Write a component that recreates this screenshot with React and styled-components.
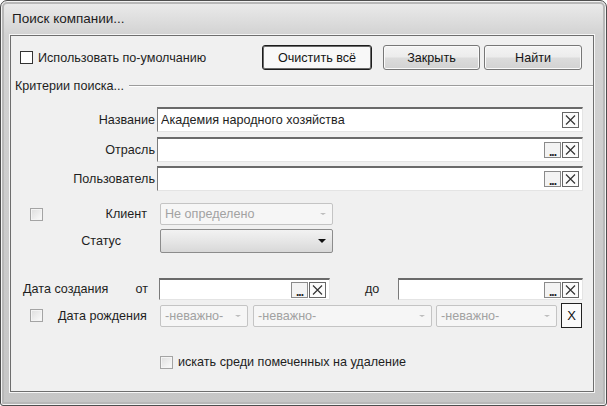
import React from "react";
import styled, { createGlobalStyle } from "styled-components";

const GlobalStyle = createGlobalStyle`
  body {
    margin: 0;
    background: #fff;
    font-family: "Liberation Sans", Arial, sans-serif;
  }
`;

const Window = styled.div`
  width: 607px;
  height: 406px;
  box-sizing: border-box;
  display: flex;
  flex-direction: column;
  padding: 0 12px 13px 9px;
  border: 1px solid #4e4e4e;
  border-radius: 7px 7px 3px 3px;
  background: linear-gradient(#ececec, #d2d2d2 34px, #c6c6c6);
  box-shadow: inset 0 0 0 1px #f3f3f3, inset 0 0 0 3px #b8b8b8;
`;

const TitleBar = styled.div`
  height: 34px;
  display: flex;
  align-items: center;
  padding-left: 2px;
  font-size: 13.5px;
  color: #1c1c1c;
`;

const Client = styled.div`
  flex: 1;
  display: flex;
  flex-direction: column;
  background: #f0f0f0;
  border: 1px solid #6e6e6e;
  box-shadow: 0 0 0 1px #f6f6f6;
  font-size: 12.6px;
  color: #1e1e1e;
`;

const TopRow = styled.div`
  display: flex;
  align-items: center;
  height: 25px;
  margin-top: 9px;
  padding: 0 11px 0 9px;
`;

const CheckLabel = styled.label`
  display: flex;
  align-items: center;
  gap: 5px;
  white-space: nowrap;
`;

const Box = styled.span`
  width: 13px;
  height: 13px;
  box-sizing: border-box;
  flex: none;
  border: 1px solid ${(p) => (p.$dark ? "#333" : "#a4a4a4")};
  background: ${(p) =>
    p.$dark ? "#fff" : "linear-gradient(135deg, #dedede, #fbfbfb)"};
  box-shadow: ${(p) => (p.$dark ? "none" : "inset 0 0 0 1px #f4f4f4")};
`;

const Spacer = styled.div`
  flex: 1;
`;

const Btn = styled.button`
  width: ${(p) => p.$w}px;
  height: 25px;
  margin-left: ${(p) => p.$ml || 0}px;
  box-sizing: border-box;
  border: 1px solid ${(p) => (p.$default ? "#1c1c1c" : "#777")};
  border-radius: 3px;
  box-shadow: ${(p) =>
    p.$default ? "inset 0 0 0 1px #6a6a6a" : "inset 0 0 0 1px #fafafa"};
  background: ${(p) =>
    p.$default
      ? "#f8f8f8"
      : "linear-gradient(#f4f4f4 0%, #ececec 48%, #dcdcdc 52%, #d2d2d2 100%)"};
  font: inherit;
  font-size: 12.6px;
  color: #151515;
  padding: 0;
`;

const GroupHeader = styled.div`
  display: flex;
  align-items: center;
  height: 16px;
  margin-top: 8px;
  padding-left: 4px;
  white-space: nowrap;
`;

const GroupLine = styled.div`
  flex: 1;
  margin-left: 5px;
  border-top: 1px solid #9c9c9c;
  border-bottom: 1px solid #fff;
`;

const Row = styled.div`
  display: flex;
  align-items: center;
  height: ${(p) => p.$h || 25}px;
  margin-top: ${(p) => p.$mt || 0}px;
  padding-left: ${(p) => p.$pl || 0}px;
`;

const Label = styled.div`
  width: ${(p) => p.$w}px;
  flex: none;
  box-sizing: border-box;
  text-align: ${(p) => p.$align || "right"};
  padding-left: ${(p) => p.$pl || 0}px;
  padding-right: ${(p) => p.$pr || 0}px;
  white-space: nowrap;
`;

const CheckCell = styled.div`
  width: ${(p) => p.$w}px;
  flex: none;
  display: flex;
  padding-left: 19px;
  box-sizing: border-box;
`;

const TextBox = styled.div`
  width: ${(p) => p.$w}px;
  height: ${(p) => p.$h || 25}px;
  margin-left: ${(p) => p.$ml || 0}px;
  box-sizing: border-box;
  display: flex;
  align-items: center;
  gap: 1px;
  padding: 0 3px 0 3px;
  background: #fff;
  border-top: 2px solid #6a6a6a;
  border-left: 1px solid #7a7a7a;
  border-right: 1px solid #e4e4e4;
  border-bottom: 1px solid #e4e4e4;
`;

const Value = styled.span`
  flex: 1;
  overflow: hidden;
  white-space: nowrap;
`;

const Dots = styled.span`
  width: 17px;
  height: 16px;
  box-sizing: border-box;
  flex: none;
  border: 1px solid #8a8a8a;
  background: #f3f3f3;
  display: flex;
  align-items: flex-end;
  justify-content: center;
  font-size: 12px;
  font-weight: bold;
  line-height: 10px;
  letter-spacing: -1px;
  color: #222;
`;

const XBox = styled.span`
  width: ${(p) => p.$w || 17}px;
  height: ${(p) => p.$h || 16}px;
  margin-left: ${(p) => p.$ml || 0}px;
  box-sizing: border-box;
  flex: none;
  border: 1px solid ${(p) => (p.$strong ? "#222" : "#666")};
  background: #fbfbfb;
  display: flex;
  align-items: center;
  justify-content: center;
  font-size: 13px;
  color: #111;
`;

const Combo = styled.div`
  width: ${(p) => p.$w}px;
  height: ${(p) => p.$h || 22}px;
  margin-left: ${(p) => p.$ml || 0}px;
  box-sizing: border-box;
  flex: none;
  display: flex;
  align-items: center;
  padding: 0 6px 0 4px;
  border: 1px solid ${(p) => (p.$disabled ? "#c4c4c4" : "#8c8c8c")};
  border-radius: 2px;
  background: ${(p) =>
    p.$disabled ? "#f6f6f6" : "linear-gradient(#f2f2f2, #e6e6e6 50%, #d8d8d8)"};
  color: #a2a2a2;
  white-space: nowrap;
`;

const Arrow = styled.span`
  width: 0;
  height: 0;
  flex: none;
  border-left: ${(p) => (p.$dark ? 4 : 3)}px solid transparent;
  border-right: ${(p) => (p.$dark ? 4 : 3)}px solid transparent;
  border-top: ${(p) => (p.$dark ? 4 : 2)}px solid ${(p) => (p.$dark ? "#111" : "#bdbdbd")};
`;

const Cross = () => (
  <svg width="11" height="10" viewBox="0 0 11 10">
    <path d="M1 0.5 L10 9.5 M10 0.5 L1 9.5" stroke="#333" strokeWidth="1.2" fill="none" />
  </svg>
);

const Lookup = ({ w, value, dots = true, h = 25, ml = 0 }) => (
  <TextBox $w={w} $h={h} $ml={ml}>
    <Value>{value}</Value>
    {dots && <Dots>...</Dots>}
    <XBox>
      <Cross />
    </XBox>
  </TextBox>
);

const Select = ({ w, text, disabled, dark, h, ml }) => (
  <Combo $w={w} $h={h} $ml={ml} $disabled={disabled}>
    <Value>{text}</Value>
    <Arrow $dark={dark} />
  </Combo>
);

export default function App() {
  return (
    <>
      <GlobalStyle />
      <Window>
        <TitleBar>Поиск компании...</TitleBar>
        <Client>
          <TopRow>
            <CheckLabel>
              <Box $dark />
              Использовать по-умолчанию
            </CheckLabel>
            <Spacer />
            <Btn $w={110} $default>Очистить всё</Btn>
            <Btn $w={97} $ml={11}>Закрыть</Btn>
            <Btn $w={98} $ml={4}>Найти</Btn>
          </TopRow>

          <GroupHeader>
            Критерии поиска...
            <GroupLine />
          </GroupHeader>

          <Row $mt={13}>
            <Label $w={146} $pr={2}>Название</Label>
            <Lookup w={426} value="Академия народного хозяйства" dots={false} />
          </Row>
          <Row $mt={5}>
            <Label $w={146} $pr={2}>Отрасль</Label>
            <Lookup w={426} value="" />
          </Row>
          <Row $mt={4}>
            <Label $w={146} $pr={2}>Пользователь</Label>
            <Lookup w={426} value="" />
          </Row>

          <Row $mt={12} $h={22}>
            <CheckCell $w={49}>
              <Box />
            </CheckCell>
            <Label $w={90} $pr={3}>Клиент</Label>
            <Select w={173} ml={10} text="Не определено" disabled />
          </Row>
          <Row $mt={4} $h={24}>
            <CheckCell $w={49} />
            <Label $w={90} $pr={29}>Статус</Label>
            <Select w={173} h={24} ml={10} text="" dark />
          </Row>

          <Row $mt={25} $h={22}>
            <Label $w={124} $align="left" $pl={12}>Дата создания</Label>
            <Label $w={22} $pr={9}>от</Label>
            <Lookup w={171} h={22} ml={2} value="" />
            <Label $w={68} $align="left" $pl={35}>до</Label>
            <Lookup w={185} h={22} value="" />
          </Row>

          <Row $mt={3} $h={25}>
            <CheckCell $w={47}>
              <Box />
            </CheckCell>
            <Label $w={99} $align="left">Дата рождения</Label>
            <Select w={88} ml={3} text="-неважно-" disabled />
            <Select w={179} ml={5} text="-неважно-" disabled />
            <Select w={121} ml={4} text="-неважно-" disabled />
            <XBox $w={21} $h={25} $ml={4} $strong>X</XBox>
          </Row>

          <Row $mt={26} $h={16} $pl={149}>
            <CheckLabel>
              <Box />
              искать среди помеченных на удаление
            </CheckLabel>
          </Row>
        </Client>
      </Window>
    </>
  );
}
